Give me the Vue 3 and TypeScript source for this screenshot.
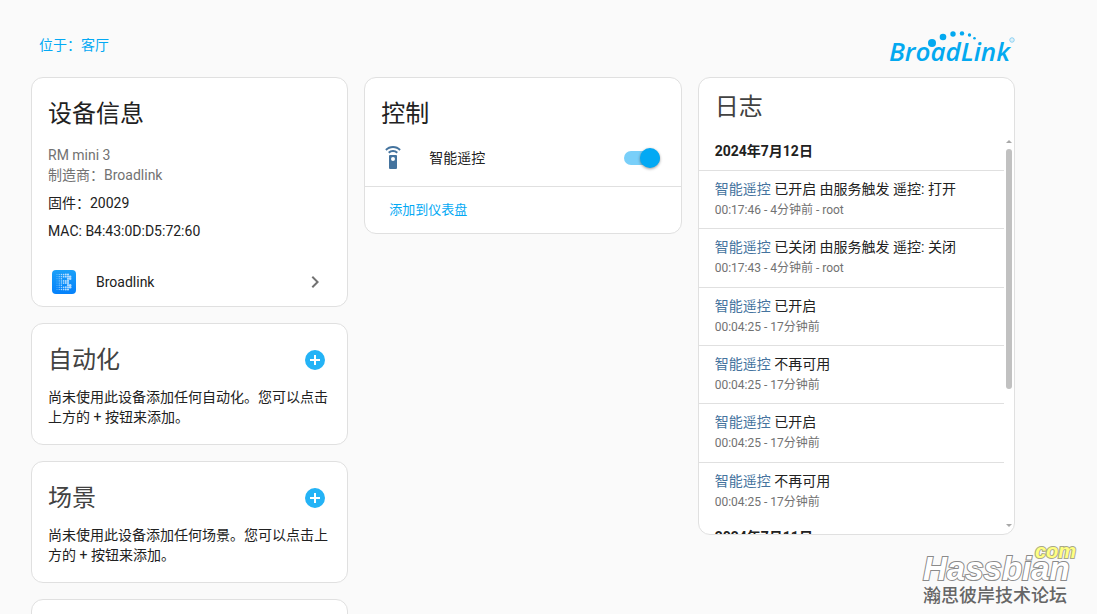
<script setup lang="ts">
import { ref } from 'vue'

interface LogEntry {
  time: string
  message: string
  detail: string
}

interface EmptySection {
  title: string
  text: string
  action: string
}

const remoteOn = ref(true)

const sections: EmptySection[] = [
  { title: '自动化', text: '尚未使用此设备添加任何自动化。您可以点击上方的 + 按钮来添加。', action: '添加自动化' },
  { title: '场景', text: '尚未使用此设备添加任何场景。您可以点击上方的 + 按钮来添加。', action: '添加场景' },
]

const entries: LogEntry[] = [
  { time: '00:17:46', message: '已开启 由服务触发 遥控: 打开', detail: '4分钟前 - root' },
  { time: '00:17:43', message: '已关闭 由服务触发 遥控: 关闭', detail: '4分钟前 - root' },
  { time: '00:04:25', message: '已开启', detail: '17分钟前' },
  { time: '00:04:25', message: '不再可用', detail: '17分钟前' },
  { time: '00:04:25', message: '已开启', detail: '17分钟前' },
  { time: '00:04:25', message: '不再可用', detail: '17分钟前' },
]

// Dot matrix of the integration icon: column, row, radius
const dots: number[][] = []
const rows = ['1111110', '1111111', '1110011', '1111110', '1111110', '1110011', '1111111', '1111110']
rows.forEach((row, y) => {
  row.split('').forEach((cell, x) => {
    if (cell === '1') dots.push([5 + x * 2.2, 4.5 + y * 2.14, 0.45 + x * 0.13])
  })
})
</script>

<template>
  <main class="page">
    <header class="top">
      <a class="area" href="#area">位于：客厅</a>
      <svg class="brand" width="128" height="42" viewBox="0 0 128 42" role="img" aria-label="BroadLink">
        <g fill="#03a9f0">
          <text class="brand-text" x="2" y="33">BroadLink</text>
          <circle cx="45" cy="15" r="4" />
          <circle cx="56" cy="9" r="3.300" />
          <circle cx="66" cy="6" r="2.700" />
          <circle cx="75" cy="5.400" r="2.200" />
          <circle cx="82.500" cy="7" r="1.700" />
          <circle cx="87.500" cy="10.300" r="1.300" />
        </g>
        <circle cx="125" cy="12" r="2.200" fill="none" stroke="#7fcdf3" />
        <circle cx="125" cy="12" r="0.600" fill="#7fcdf3" />
      </svg>
    </header>

    <div class="columns">
      <div class="column">
        <section class="card">
          <h1 class="title">设备信息</h1>
          <div class="info">
            <p class="muted">RM mini 3</p>
            <p class="muted">制造商：Broadlink</p>
            <p class="extra">固件：20029</p>
            <p class="extra">MAC: B4:43:0D:D5:72:60</p>
          </div>
          <a class="integration" href="#broadlink">
            <svg width="24" height="24" viewBox="0 0 24 24" aria-hidden="true">
              <defs>
                <linearGradient id="tile" x1="0" y1="0" x2="0" y2="1">
                  <stop offset="0" stop-color="#1ba0f8" />
                  <stop offset="1" stop-color="#0581fb" />
                </linearGradient>
              </defs>
              <rect width="24" height="24" rx="4" fill="url(#tile)" />
              <circle v-for="(d, i) in dots" :key="i" :cx="d[0]" :cy="d[1]" :r="d[2]" fill="#b4dcff" />
            </svg>
            <span class="integration-name">Broadlink</span>
            <svg width="24" height="24" viewBox="0 0 24 24" aria-hidden="true">
              <path fill="#727272" d="M8.590 16.580 13.170 12 8.590 7.410 10 6l6 6-6 6z" />
            </svg>
          </a>
        </section>

        <section v-for="s in sections" :key="s.title" class="card">
          <div class="title-row">
            <h1 class="title light">{{ s.title }}</h1>
            <button class="add" type="button" :aria-label="s.action">
              <svg width="24" height="24" viewBox="0 0 24 24" aria-hidden="true">
                <path fill="#24b3f6" d="M17 13h-4v4h-2v-4H7v-2h4V7h2v4h4m-5-9A10 10 0 0 0 2 12a10 10 0 0 0 10 10 10 10 0 0 0 10-10A10 10 0 0 0 12 2" />
              </svg>
            </button>
          </div>
          <p class="empty">{{ s.text }}</p>
        </section>

        <section class="card stub"></section>
      </div>

      <div class="column">
        <section class="card">
          <h1 class="title">控制</h1>
          <label class="control">
            <svg width="24" height="24" viewBox="0 0 24 24" aria-hidden="true">
              <path fill="#44739e" d="M12 0C8.960 0 6.210 1.230 4.220 3.220l1.410 1.410C7.260 3 9.500 2 12 2s4.740 1 6.360 2.640l1.410-1.410C17.790 1.230 15.040 0 12 0M7.050 6.050l1.410 1.410a5.020 5.020 0 0 1 7.080 0l1.410-1.410A6.976 6.976 0 0 0 12 4c-1.930 0-3.680.780-4.950 2.050M12 15a2 2 0 0 1-2-2 2 2 0 0 1 2-2 2 2 0 0 1 2 2 2 2 0 0 1-2 2m3-6H9a1 1 0 0 0-1 1v12a1 1 0 0 0 1 1h6a1 1 0 0 0 1-1V10a1 1 0 0 0-1-1" />
            </svg>
            <span class="control-name">智能遥控</span>
            <input v-model="remoteOn" class="switch" type="checkbox" role="switch" />
          </label>
          <div class="actions">
            <button class="text-button" type="button">添加到仪表盘</button>
          </div>
        </section>
      </div>

      <div class="column">
        <section class="card log">
          <h1 class="log-title">日志</h1>
          <div class="log-body">
            <div class="log-list">
              <h2 class="date">2024年7月12日</h2>
              <ul class="entries">
                <li v-for="(e, i) in entries" :key="i" class="entry">
                  <p class="message"><a class="entity" href="#entity">智能遥控</a> {{ e.message }}</p>
                  <p class="meta">{{ e.time }} - {{ e.detail }}</p>
                </li>
              </ul>
              <h2 class="date">2024年7月11日</h2>
            </div>
            <div class="scrollbar" aria-hidden="true">
              <span class="arrow up"></span>
              <span class="track"><span class="thumb"></span></span>
              <span class="arrow down"></span>
            </div>
          </div>
        </section>
      </div>
    </div>

    <div class="watermark">
      <svg width="158" height="42" viewBox="0 0 158 42" role="img" aria-label="Hassbian com">
        <text class="mark-name" x="3" y="38">Hassbian</text>
        <text class="mark-com" x="115" y="16">com</text>
      </svg>
      <span class="mark-sub">瀚思彼岸技术论坛</span>
    </div>
  </main>
</template>

<style>
body {
  background: #fafafa;
}
</style>

<style scoped>
.page {
  position: relative;
  box-sizing: border-box;
  height: 100vh;
  overflow: hidden;
  padding: 28px 82px 0 31px;
  background: #fafafa;
  color: #212121;
  font-family: Roboto, "Noto Sans CJK SC", sans-serif;
  font-size: 14px;
  line-height: 20px;
}

h1,
h2,
p,
ul {
  margin: 0;
  padding: 0;
  font-weight: 400;
}

a {
  text-decoration: none;
}

svg {
  display: block;
  flex: none;
  overflow: visible;
}

button {
  border: 0;
  padding: 0;
  background: none;
  font: inherit;
  cursor: pointer;
}

.top {
  display: flex;
  justify-content: space-between;
  height: 49px;
}

.area {
  padding: 7px 8px;
  color: #03a9f4;
}

.brand-text {
  font: italic 600 26px "Open Sans", sans-serif;
}

.columns {
  display: grid;
  grid-template-columns: repeat(3, minmax(0, 1fr));
  align-items: start;
  gap: 16px;
}

.column {
  display: flex;
  flex-direction: column;
  gap: 16px;
}

.card {
  box-sizing: border-box;
  border: 1px solid #e0e0e0;
  border-radius: 12px;
  background: #fff;
}

.title {
  padding: 16px 16px 0;
  font-size: 24px;
  line-height: 40px;
}

.light {
  flex: 1;
  color: #424242;
}

.title-row {
  display: flex;
  align-items: flex-end;
  padding-right: 20px;
}

.add {
  padding-bottom: 8px;
}

.info {
  padding: 11px 16px 0;
}

.muted {
  color: #727272;
}

.extra {
  margin-top: 8px;
}

.integration {
  display: flex;
  align-items: center;
  height: 49px;
  margin-top: 16px;
  padding: 0 20px;
  color: #212121;
}

.integration-name {
  flex: 1;
  padding-left: 20px;
}

.empty {
  padding: 7px 16px 17px;
}

.stub {
  height: 122px;
}

.control {
  display: flex;
  align-items: center;
  height: 48px;
  padding: 0 21px 0 16px;
}

.control-name {
  flex: 1;
  padding-left: 24px;
}

.switch {
  position: relative;
  flex: none;
  appearance: none;
  width: 36px;
  height: 14px;
  margin: 0;
  border-radius: 7px;
  background: #bdbdbd;
  cursor: pointer;
}

.switch::before {
  content: "";
  position: absolute;
  top: -3px;
  left: 0;
  width: 20px;
  height: 20px;
  border-radius: 50%;
  background: #fafafa;
  box-shadow: 0 1px 3px rgba(0, 0, 0, 0.4);
}

.switch:checked {
  background: #79cff9;
}

.switch:checked::before {
  left: 16px;
  background: #03a9f4;
}

.actions {
  margin-top: 4px;
  border-top: 1px solid #e0e0e0;
  padding: 5px 24px;
}

.text-button {
  height: 36px;
  color: #03a9f4;
  font-size: 13px;
}

.log {
  display: flex;
  flex-direction: column;
  height: calc(100vh - 156px);
  overflow: hidden;
}

.log-title {
  flex: none;
  padding: 0 16px;
  color: #424242;
  font-size: 24px;
  line-height: 58px;
}

.log-body {
  display: flex;
  flex: 1;
  min-height: 0;
}

.log-list {
  flex: 1;
  overflow: hidden;
}

.date {
  height: 34px;
  padding: 0 16px;
  font-size: 14px;
  font-weight: 700;
  line-height: 30px;
}

.entries {
  display: grid;
  grid-auto-rows: 1fr;
  height: 350px;
  padding-bottom: 2px;
  list-style: none;
}

.entry {
  border-top: 1px solid #e0e0e0;
  padding: 8px 16px 0;
}

.message {
  white-space: nowrap;
}

.entity {
  color: #44739e;
}

.meta {
  color: #727272;
  font-size: 12px;
  line-height: 22px;
}

.scrollbar {
  display: flex;
  flex-direction: column;
  align-items: center;
  width: 10px;
  padding: 4px 0 7px;
  box-sizing: border-box;
}

.arrow {
  border: 3px solid transparent;
}

.up {
  border-top: 0;
  border-bottom-color: #a8a8a8;
}

.down {
  border-bottom: 0;
  border-top-color: #a8a8a8;
}

.track {
  flex: 1;
  width: 6px;
  padding-top: 6px;
}

.thumb {
  display: block;
  height: 64%;
  border-radius: 3px;
  background: #c1c1c1;
}

.watermark {
  position: absolute;
  right: 19px;
  bottom: 6px;
}

.mark-name {
  fill: #fff;
  stroke: #8a8a8a;
  stroke-width: 2px;
  paint-order: stroke;
  font: italic 700 33px "Liberation Sans", sans-serif;
}

.mark-com {
  fill: #ffff80;
  stroke: #a8a88a;
  stroke-width: 2px;
  paint-order: stroke;
  font: italic 700 20px "Liberation Sans", sans-serif;
}

.mark-sub {
  display: block;
  padding-left: 3px;
  color: #666;
  font-size: 18px;
  font-weight: 500;
  line-height: 24px;
}
</style>
